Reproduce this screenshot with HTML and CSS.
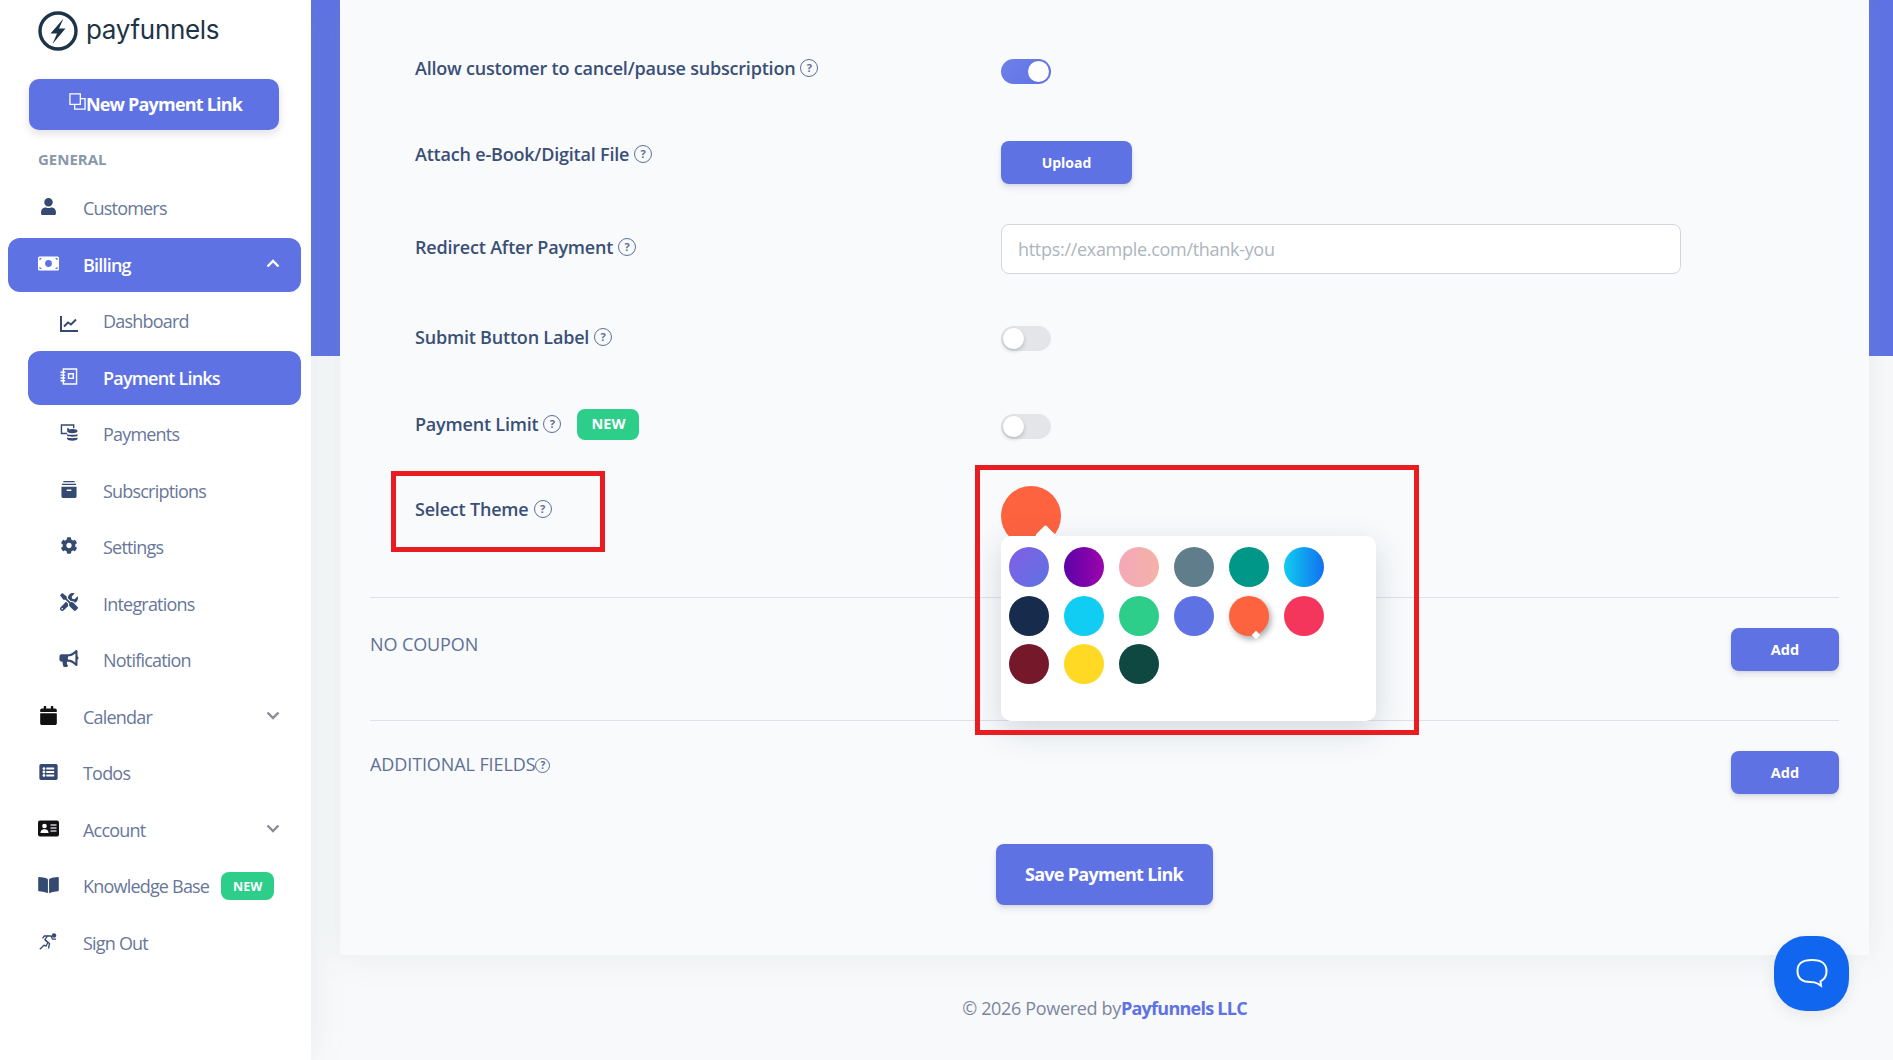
FILE: index.html
```html
<!DOCTYPE html>
<html lang="en">
<head>
    <meta charset="UTF-8">
    <meta name="viewport" content="width=device-width, initial-scale=1.0">
    <title>Payfunnels - Payment Link</title>
    <link rel="stylesheet" href="styles.css">
</head>
<body>
    <div class="layout">
        <aside class="sidebar">
            <div class="brand">
                <svg class="brand-mark" viewBox="0 0 40 40"><circle cx="20" cy="20" r="18" fill="none" stroke="#1d3448" stroke-width="3.4"/><path d="M25.500 7.500 12.500 22.500h6.500L14.500 33 27.500 17.500h-6.500z" fill="#1d3448"/></svg>
                <span class="brand-name">payfunnels</span>
            </div>
            <a class="new-link">
                <svg class="new-link-icon" viewBox="0 0 18 18" fill="none" stroke="#fff" stroke-width="1.400"><path d="M1 1h11v11H1z"/><path d="M6 12v5h11V6h-5"/></svg>
                New Payment Link
            </a>
            <div class="nav-title">GENERAL</div>
            <nav class="nav">
                <a class="nav-item">
                    <svg class="icon" viewBox="0 0 448 512" style="height:17px"><path d="M224 256c70.700 0 128-57.300 128-128S294.700 0 224 0 96 57.300 96 128s57.300 128 128 128zm89.600 32h-16.700c-22.200 10.200-46.900 16-72.900 16s-50.600-5.800-72.900-16h-16.700C60.200 288 0 348.200 0 422.400V464c0 26.500 21.500 48 48 48h352c26.500 0 48-21.500 48-48v-41.600c0-74.200-60.200-134.400-134.400-134.400z"/></svg>
                    Customers
                </a>
                <a class="nav-item active">
                    <svg class="icon" viewBox="0 0 21 14"><path d="M1.500 0h18A1.500 1.500 0 0 1 21 1.500v11a1.500 1.500 0 0 1-1.500 1.500h-18A1.500 1.500 0 0 1 0 12.500v-11A1.500 1.500 0 0 1 1.500 0z"/><circle cx="10.500" cy="7" r="3.400" fill="#5e72e4"/><path d="M1.500 1.500h2.500L1.500 4zM19.500 1.500H17L19.500 4zM1.500 12.500h2.500L1.500 10zM19.500 12.500H17L19.500 10z" fill="#5e72e4"/></svg>
                    Billing
                    <svg class="chev" viewBox="0 0 14 9"><path d="M1.500 7.500 7 2l5.500 5.500"/></svg>
                </a>
                <a class="nav-item sub">
                    <svg class="icon line icon-chart" viewBox="0 0 18 17"><path d="M1 1v15h17" stroke-width="2"/><path d="M4 11.500 8 7.500l3 2 5-5" stroke-width="1.900"/></svg>
                    Dashboard
                </a>
                <a class="nav-item sub active">
                    <svg class="icon line" viewBox="0 0 18 18" stroke-width="1.500"><path d="M3 1h14v16H3z"/><path d="M0 4.500h5M0 7.500h5M0 10.500h5M0 13.500h5"/><path d="M8.500 6h5v5h-5z"/></svg>
                    Payment Links
                </a>
                <a class="nav-item sub">
                    <svg class="icon" viewBox="0 0 18 18"><path d="M7 10H1V1h13v3.500" fill="none" stroke="#344a70" stroke-width="1.500"/><path d="M7 4.500h2v2H7z"/><ellipse cx="12.500" cy="7.500" rx="5.500" ry="2.200"/><path d="M7 10.500c1 1.300 10 1.300 11 0v2c-1 1.300-10 1.300-11 0zM7 14c1 1.300 10 1.300 11 0v2c-1 2.300-10 2.300-11 0z"/></svg>
                    Payments
                </a>
                <a class="nav-item sub">
                    <svg class="icon" viewBox="0 0 20 18"><path d="M4 0h12v1.300H4zM2.500 2.800h15v1.400h-15zM2 6h16v10.500a1.500 1.500 0 0 1-1.500 1.500h-13A1.500 1.500 0 0 1 2 16.500zm5.500 3v1.600h5V9z" fill-rule="evenodd"/></svg>
                    Subscriptions
                </a>
                <a class="nav-item sub">
                    <svg class="icon" viewBox="0 0 512 512" style="height:17px"><path d="M487.400 315.700l-42.600-24.600c4.300-23.200 4.300-47 0-70.200l42.600-24.600c4.900-2.800 7.100-8.600 5.500-14-11.100-35.600-30-67.800-54.700-94.600-3.800-4.100-10-5.100-14.800-2.300L380.800 110c-17.900-15.400-38.500-27.300-60.800-35.100V25.800c0-5.600-3.900-10.500-9.400-11.700-36.700-8.200-74.300-7.800-109.200 0-5.500 1.200-9.400 6.100-9.400 11.700V75c-22.200 7.900-42.800 19.800-60.800 35.100L88.700 85.500c-4.900-2.800-11-1.900-14.800 2.300-24.700 26.700-43.600 58.900-54.700 94.600-1.700 5.400.6 11.200 5.500 14L67.300 221c-4.300 23.200-4.300 47 0 70.200l-42.600 24.600c-4.900 2.800-7.100 8.600-5.500 14 11.100 35.600 30 67.800 54.700 94.600 3.800 4.100 10 5.100 14.800 2.300l42.600-24.600c17.900 15.400 38.500 27.300 60.800 35.100v49.200c0 5.600 3.900 10.500 9.400 11.700 36.700 8.200 74.300 7.800 109.200 0 5.500-1.200 9.400-6.100 9.400-11.700v-49.200c22.200-7.900 42.800-19.800 60.800-35.100l42.600 24.600c4.900 2.800 11 1.900 14.800-2.300 24.700-26.700 43.600-58.900 54.700-94.600 1.500-5.500-.7-11.300-5.600-14.100zM256 336c-44.100 0-80-35.900-80-80s35.900-80 80-80 80 35.900 80 80-35.900 80-80 80z"/></svg>
                    Settings
                </a>
                <a class="nav-item sub">
                    <svg class="icon" viewBox="0 0 512 512" style="height:18px"><path d="M501.100 395.700L384 278.600c-23.100-23.100-57.600-27.600-85.400-13.900L192 158.100V96L64 0 0 64l96 128h62.100l106.600 106.600c-13.600 27.800-9.200 62.300 13.900 85.400l117.100 117.100c14.600 14.600 38.200 14.600 52.700 0l52.700-52.700c14.500-14.600 14.500-38.200 0-52.700zM331.700 225c28.300 0 54.900 11 74.900 31l19.400 19.400c15.800-6.900 30.800-16.500 43.800-29.500 37.100-37.100 49.700-89.300 37.900-136.700-2.200-9-13.500-12.100-20.100-5.500l-74.400 74.400-67.900-11.300L334 98.900l74.400-74.400c6.600-6.600 3.400-17.900-5.700-20.200-47.400-11.700-99.600.9-136.600 37.900-28.500 28.500-41.900 66.100-41.200 103.600l82.100 82.100c8.100-1.900 16.500-2.900 24.700-2.900zm-103.900 82l-56.700-56.700L18.700 402.800c-25 25-25 65.500 0 90.500s65.500 25 90.500 0l123.600-123.600c-7.600-19.900-9.900-41.600-5-62.700zM64 472c-13.200 0-24-10.800-24-24 0-13.300 10.700-24 24-24s24 10.700 24 24c0 13.200-10.700 24-24 24z"/></svg>
                    Integrations
                </a>
                <a class="nav-item sub">
                    <svg class="icon" viewBox="0 0 576 512" style="height:17px"><path d="M576 240c0-23.630-12.950-44.040-32-55.120V32.010C544 23.260 537.020 0 512 0c-7.120 0-14.190 2.380-19.980 7.020l-85.030 68.030C364.280 109.190 310.660 128 256 128H64c-35.350 0-64 28.650-64 64v96c0 35.350 28.650 64 64 64h33.700c-1.390 10.480-2.180 21.140-2.180 32 0 39.770 9.260 77.350 25.560 110.940 5.190 10.690 16.520 17.060 28.400 17.060h74.280c26.050 0 41.690-29.840 25.900-50.560-16.400-21.520-26.150-48.360-26.150-77.440 0-11.110 1.620-21.790 4.410-32H256c54.660 0 108.280 18.810 150.980 52.950l85.030 68.030a32.023 32.023 0 0 0 19.980 7.020c24.920 0 32-22.780 32-32V295.130C563.050 284.040 576 263.630 576 240zm-96 141.420l-33.050-26.440C392.950 311.780 325.120 288 256 288v-96c69.120 0 136.950-23.780 190.950-66.980L480 98.580v282.840z"/></svg>
                    Notification
                </a>
                <a class="nav-item">
                    <svg class="icon dark" viewBox="0 0 448 512" style="height:19px"><path d="M12 192h424c6.600 0 12 5.400 12 12v260c0 26.500-21.500 48-48 48H48c-26.500 0-48-21.500-48-48V204c0-6.600 5.400-12 12-12zm436-44v-36c0-26.500-21.500-48-48-48h-48V12c0-6.600-5.400-12-12-12h-40c-6.600 0-12 5.400-12 12v52H160V12c0-6.600-5.400-12-12-12h-40c-6.600 0-12 5.400-12 12v52H48C21.500 64 0 85.500 0 112v36c0 6.600 5.400 12 12 12h424c6.600 0 12-5.400 12-12z"/></svg>
                    Calendar
                    <svg class="chev down" viewBox="0 0 14 9"><path d="M1.500 1.500 7 7l5.500-5.500"/></svg>
                </a>
                <a class="nav-item">
                    <svg class="icon" viewBox="0 0 512 448" style="height:16px"><path transform="translate(0 -32)" d="M464 480H48c-26.510 0-48-21.490-48-48V80c0-26.510 21.490-48 48-48h416c26.510 0 48 21.490 48 48v352c0 26.510-21.490 48-48 48zM128 120c-22.091 0-40 17.909-40 40s17.909 40 40 40 40-17.909 40-40-17.909-40-40-40zm0 96c-22.091 0-40 17.909-40 40s17.909 40 40 40 40-17.909 40-40-17.909-40-40-40zm0 96c-22.091 0-40 17.909-40 40s17.909 40 40 40 40-17.909 40-40-17.909-40-40-40zm288-136v-32c0-6.627-5.373-12-12-12H204c-6.627 0-12 5.373-12 12v32c0 6.627 5.373 12 12 12h200c6.627 0 12-5.373 12-12zm0 96v-32c0-6.627-5.373-12-12-12H204c-6.627 0-12 5.373-12 12v32c0 6.627 5.373 12 12 12h200c6.627 0 12-5.373 12-12zm0 96v-32c0-6.627-5.373-12-12-12H204c-6.627 0-12 5.373-12 12v32c0 6.627 5.373 12 12 12h200c6.627 0 12-5.373 12-12z"/></svg>
                    Todos
                </a>
                <a class="nav-item">
                    <svg class="icon dark" viewBox="0 0 21 16"><rect width="21" height="16" rx="2"/><circle cx="6.500" cy="5.500" r="2.300" fill="#fff"/><path d="M2.500 12.500c0-3 1.800-3.800 4-3.800s4 .8 4 3.800z" fill="#fff"/><path d="M12.500 4.500h6M12.500 7.500h6M12.500 10.500h6" stroke="#c9ccd2" stroke-width="1.300"/></svg>
                    Account
                    <svg class="chev down" viewBox="0 0 14 9"><path d="M1.500 1.500 7 7l5.500-5.500"/></svg>
                </a>
                <a class="nav-item">
                    <svg class="icon" viewBox="0 0 576 448" style="height:16px"><path transform="translate(0 -32)" d="M542.220 32.050c-54.800 3.110-163.720 14.430-230.960 55.590-4.640 2.840-7.270 7.890-7.270 13.170v363.870c0 11.550 12.630 18.850 23.280 13.490 69.180-34.820 169.230-44.320 218.700-46.920 16.890-.89 30.020-14.430 30.020-30.660V62.750c.01-17.710-15.350-31.740-33.770-30.700zM264.730 87.640C197.500 46.480 88.580 35.170 33.780 32.050 15.360 31.010 0 45.040 0 62.750V400.600c0 16.240 13.130 29.780 30.020 30.660 49.490 2.600 149.590 12.110 218.770 46.950 10.620 5.350 23.210-1.940 23.210-13.460V100.630c0-5.290-2.620-10.140-7.270-12.990z"/></svg>
                    Knowledge Base
                    <span class="badge small">NEW</span>
                </a>
                <a class="nav-item">
                    <svg class="icon line" viewBox="0 0 19 17" stroke-width="1.300"><circle cx="15" cy="2.500" r="2.200" fill="#344a70" stroke="none"/><path d="M.8 16.200 5 12.300l2.200.6 1.700-3.700-3-2.500 2.600-3.700H5.300L3.500 5.300"/><path d="M8.500 3h3.500l1.500 3.200H17"/><path d="M6 7 10.500 10.500 9.500 15.500"/></svg>
                    Sign Out
                </a>
            </nav>
        </aside>

        <main class="main">
            <form class="card">
                <div class="row row-cancel">
                    <label class="field-label">Allow customer to cancel/pause subscription <span class="help">?</span></label>
                    <span class="toggle on"></span>
                </div>
                <div class="row row-upload">
                    <label class="field-label">Attach e-Book/Digital File <span class="help">?</span></label>
                    <button type="button" class="btn btn-upload">Upload</button>
                </div>
                <div class="row row-redirect">
                    <label class="field-label">Redirect After Payment <span class="help">?</span></label>
                    <input class="text-input" type="text" placeholder="https://example.com/thank-you">
                </div>
                <div class="row row-submit">
                    <label class="field-label">Submit Button Label <span class="help">?</span></label>
                    <span class="toggle"></span>
                </div>
                <div class="row row-limit">
                    <label class="field-label">Payment Limit <span class="help">?</span> <span class="badge">NEW</span></label>
                    <span class="toggle"></span>
                </div>
                <div class="row row-theme">
                    <label class="field-label">Select Theme <span class="help">?</span></label>
                    <div class="theme-picker">
                        <span class="theme-current"></span>
                        <div class="theme-panel">
                            <span class="swatch s-violet"></span>
                            <span class="swatch s-purple"></span>
                            <span class="swatch s-pink"></span>
                            <span class="swatch s-slate"></span>
                            <span class="swatch s-teal"></span>
                            <span class="swatch s-sky"></span>
                            <span class="swatch s-navy"></span>
                            <span class="swatch s-cyan"></span>
                            <span class="swatch s-green"></span>
                            <span class="swatch s-blue"></span>
                            <span class="swatch s-orange selected"></span>
                            <span class="swatch s-red"></span>
                            <span class="swatch s-maroon"></span>
                            <span class="swatch s-yellow"></span>
                            <span class="swatch s-forest"></span>
                        </div>
                    </div>
                </div>

                <section class="extra extra-coupon">
                    <h3 class="extra-title">NO COUPON</h3>
                    <button type="button" class="btn btn-add">Add</button>
                </section>
                <section class="extra extra-fields">
                    <h3 class="extra-title">ADDITIONAL FIELDS<span class="help thin">?</span></h3>
                    <button type="button" class="btn btn-add">Add</button>
                </section>

                <div class="save-row">
                    <button type="button" class="btn btn-save">Save Payment Link</button>
                </div>
            </form>
            <footer class="footer">© 2026 Powered by<a class="footer-link">Payfunnels LLC</a></footer>
        </main>
    </div>

    <!-- red marks drawn over the screenshot -->
    <div class="mark mark-label"></div>
    <div class="mark mark-picker"></div>

    <a class="chat">
        <svg viewBox="0 0 34 32" width="34" height="32" fill="none" stroke="#fff" stroke-width="2"><path d="M17 2C8 2 2.500 4.500 2.500 13c0 8 5 11 13 11 3 0 5 .3 7 1.500l3.500 2.300-.5-4.500c4-2 6-5 6-9.800C31.500 4.500 26 2 17 2z"/></svg>
    </a>
</body>
</html>
```

FILE: styles.css
```css
/* General */
* {
    box-sizing: border-box;
}

body {
    margin: 0;
    height: 100vh;
    overflow: hidden;
    background: #f8f9fa;
    color: #344a70;
    font-family: "Open Sans", sans-serif;
    font-size: 18px;
}

.layout {
    display: flex;
    height: 100vh;
}

/* Sidebar */
.sidebar {
    flex: 0 0 311px;
    background: #fff;
    box-shadow: 0 0 32px rgba(136, 152, 170, 0.15);
    z-index: 2;
}

.brand {
    display: flex;
    align-items: flex-start;
    height: 79px;
    padding: 11px 0 0 38px;
}

.brand-mark {
    width: 40px;
    height: 40px;
}

.brand-name {
    margin-left: 8px;
    font-family: "Inter", sans-serif;
    font-size: 26px;
    line-height: 37px;
    letter-spacing: -0.3px;
    color: #1d3448;
}

.new-link {
    display: flex;
    align-items: center;
    justify-content: center;
    width: 250px;
    height: 51px;
    margin-left: 29px;
    padding: 0 0 1px 3px;
    background: #5e72e4;
    border-radius: 10px;
    box-shadow: 0 4px 8px rgba(50, 50, 93, 0.14);
    color: #fff;
    font-size: 18px;
    font-weight: 700;
    letter-spacing: -0.800px;
}

.new-link-icon {
    width: 17px;
    height: 17px;
    margin-top: -6px;
}

.nav-title {
    height: 22px;
    margin: 18px 0 11px 38px;
    color: #8898aa;
    font-size: 15px;
    font-weight: 700;
    line-height: 22px;
}

.nav-item {
    display: flex;
    align-items: center;
    gap: 24px;
    width: 293px;
    height: 54px;
    margin: 0 0 2.500px 8px;
    padding-left: 30px;
    border-radius: 12px;
    color: #677799;
    letter-spacing: -0.800px;
}

.nav-item.sub {
    width: 273px;
    margin-left: 28px;
    padding-left: 31px;
    gap: 24px;
}

.nav-item.active {
    background: #5e72e4;
    color: #fff;
    font-weight: 600;
}

.icon {
    flex: 0 0 auto;
    width: 20px;
    height: 17px;
    margin-top: -3px;
    fill: #344a70;
}

.nav-item:not(.sub) .icon {
    width: 21px;
}

.icon.dark {
    fill: #111;
}

.nav-item.active .icon {
    fill: #fff;
}

.icon.line {
    fill: none;
    stroke: #344a70;
}

.nav-item.active .icon.line {
    fill: none;
    stroke: #fff;
}

.icon.icon-chart {
    margin-top: 4px;
}

.chev {
    width: 14px;
    height: 9px;
    margin: -3px 21px 0 auto;
    fill: none;
    stroke: #fff;
    stroke-width: 2.400;
}

.chev.down {
    stroke: #8a8d94;
}

.badge {
    display: inline-flex;
    align-items: center;
    justify-content: center;
    width: 62px;
    height: 31px;
    margin-left: 11px;
    background: #2dce89;
    border-radius: 8px;
    color: #fff;
    font-size: 14.500px;
    font-weight: 700;
    letter-spacing: 0;
}

.badge.small {
    width: 53px;
    height: 28px;
    margin-left: -12px;
    font-size: 12.500px;
}

/* Main */
.main {
    flex: 1;
    padding: 0 24px 0 29px;
    background: linear-gradient(#5e72e4, #5e72e4) no-repeat top / 100% 356px;
}

.card {
    height: 955px;
    padding: 55px 30px 50px;
    background: #f8fafc;
    box-shadow: 0 0 32px rgba(136, 152, 170, 0.15);
}

.row {
    display: grid;
    grid-template-columns: 586px 680px;
    align-items: start;
    padding-left: 45px;
}

.field-label {
    display: flex;
    align-items: center;
    gap: 5px;
    height: 26px;
    font-weight: 600;
    line-height: 26px;
    letter-spacing: -0.200px;
    color: #3a4f76;
}

.row-cancel {
    height: 86px;
}

.row-cancel .toggle {
    margin-top: 4px;
}

.row-upload {
    height: 83px;
}

.row-redirect {
    height: 100px;
}

.row-redirect .field-label,
.row-theme .field-label {
    margin-top: 10px;
}

.row-submit {
    height: 87px;
}

.row-submit .toggle {
    margin-top: 2px;
}

.row-limit {
    height: 75px;
}

.row-limit .toggle {
    margin-top: 3px;
}

.row-theme {
    height: 111px;
}

.help {
    display: inline-flex;
    align-items: center;
    justify-content: center;
    flex: 0 0 auto;
    width: 18px;
    height: 18px;
    border: 1.500px solid #5f7094;
    border-radius: 50%;
    color: #5f7094;
    font-size: 11px;
    font-weight: 700;
    letter-spacing: 0;
}

.help.thin {
    width: 15px;
    height: 15px;
    font-size: 10px;
    border-width: 1px;
    vertical-align: 2px;
}

.toggle {
    display: flex;
    justify-content: flex-start;
    align-items: center;
    width: 50px;
    height: 25px;
    padding: 2px;
    background: #e4e5e8;
    border-radius: 13px;
}

.toggle::after {
    content: "";
    width: 21px;
    height: 21px;
    background: #fff;
    border-radius: 50%;
    box-shadow: 0 2px 4px rgba(0, 0, 0, 0.2);
}

.toggle.on {
    justify-content: flex-end;
    background: linear-gradient(135deg, #6d80ea, #5e72e4);
}

.toggle.on::after {
    box-shadow: none;
}

.btn {
    border: none;
    background: #5e72e4;
    border-radius: 8px;
    box-shadow: 0 4px 6px rgba(50, 50, 93, 0.11), 0 1px 3px rgba(0, 0, 0, 0.08);
    color: #fff;
    font-family: inherit;
    font-weight: 700;
    cursor: pointer;
}

.btn-upload {
    width: 131px;
    height: 43px;
    font-size: 14px;
}

.btn-add {
    width: 108px;
    height: 43px;
    font-size: 14.500px;
}

.btn-save {
    width: 217px;
    height: 61px;
    margin-left: -1px;
    padding-bottom: 3px;
    font-size: 18px;
    letter-spacing: -0.700px;
}

.text-input {
    width: 680px;
    height: 50px;
    padding: 0 16px;
    border: 1px solid #d3d6de;
    border-radius: 8px;
    background: #fff;
    font-family: inherit;
    font-size: 18px;
    letter-spacing: -0.300px;
}

.text-input::placeholder {
    color: #adb5bd;
}

/* Theme picker */
.theme-picker {
    position: relative;
}

.theme-current {
    display: block;
    width: 60px;
    height: 60px;
    background: #fe6340;
    border-radius: 50%;
}

.theme-panel {
    position: absolute;
    top: 50px;
    left: 0;
    display: grid;
    grid-template-columns: repeat(6, 40px);
    grid-auto-rows: 40px;
    gap: 8.500px 15px;
    width: 375px;
    height: 185px;
    padding: 11px 8px;
    background: #fff;
    border-radius: 10px;
    box-shadow: 0 10px 32px rgba(50, 60, 80, 0.18);
}

.theme-panel::before {
    content: "";
    position: absolute;
    top: -8px;
    left: 37px;
    width: 15px;
    height: 15px;
    background: #fff;
    border-radius: 2px;
    transform: rotate(45deg);
}

.swatch {
    position: relative;
    border-radius: 50%;
}

.swatch.selected {
    box-shadow: 2px 3px 6px rgba(0, 0, 0, 0.35);
}

.swatch.selected::after {
    content: "";
    position: absolute;
    bottom: -2px;
    right: 10px;
    width: 6px;
    height: 6px;
    background: #fff;
    transform: rotate(45deg);
}

.s-violet { background: linear-gradient(135deg, #825ee4, #5e72e4); }
.s-purple { background: linear-gradient(90deg, #5c02a8, #9c04ac); }
.s-pink { background: linear-gradient(90deg, #f3a8b8, #f5b2a8); }
.s-slate { background: #607d8b; }
.s-teal { background: #009688; }
.s-sky { background: linear-gradient(90deg, #11cdef, #1171ef); }
.s-navy { background: #172b4d; }
.s-cyan { background: #11cdf3; }
.s-green { background: #2dce89; }
.s-blue { background: #5e72e4; }
.s-orange { background: #fe6340; }
.s-red { background: #f5365c; }
.s-maroon { background: #751829; }
.s-yellow { background: #ffd923; }
.s-forest { background: #0f4840; }

/* Coupon and extra fields */
.extra {
    display: flex;
    justify-content: space-between;
    align-items: flex-start;
    padding-top: 30px;
    border-top: 1px solid #dde0e9;
}

.extra-coupon {
    height: 123px;
}

.extra-title {
    margin: 3px 0 0;
    color: #5f7094;
    font-size: 18px;
    font-weight: 400;
    line-height: 26px;
    letter-spacing: -0.100px;
}

.extra-fields .extra-title {
    margin-top: 0;
}

.save-row {
    display: flex;
    justify-content: center;
    margin-top: 50px;
}

.footer {
    padding-top: 40px;
    color: #7a879f;
    font-size: 18px;
    line-height: 26px;
    letter-spacing: -0.330px;
    text-align: center;
}

.footer-link {
    color: #5e72e4;
    font-weight: 700;
    letter-spacing: -0.750px;
}

/* Red marks */
.mark {
    position: absolute;
    border: 5px solid #e91c21;
    z-index: 3;
}

.mark-label {
    left: 391px;
    top: 471px;
    width: 214px;
    height: 81px;
}

.mark-picker {
    left: 975px;
    top: 465px;
    width: 444px;
    height: 270px;
}

/* Chat button */
.chat {
    position: absolute;
    right: 44px;
    bottom: 49px;
    display: flex;
    align-items: center;
    justify-content: center;
    width: 75px;
    height: 75px;
    background: #1166f0;
    border-radius: 32px;
    box-shadow: 0 4px 16px rgba(0, 0, 0, 0.08);
    z-index: 4;
}
```
